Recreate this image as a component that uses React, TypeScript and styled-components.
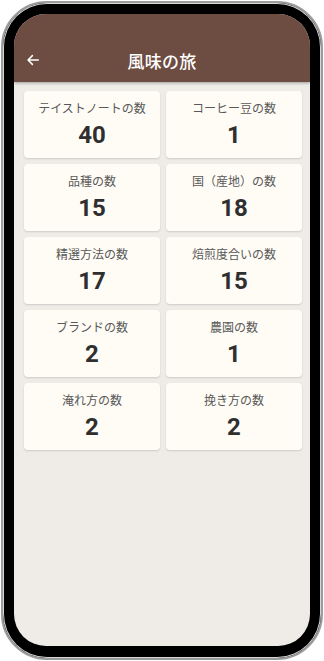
import styled, { createGlobalStyle } from "styled-components";

const GlobalStyle = createGlobalStyle`
  html, body {
    margin: 0;
    padding: 0;
    background: #ffffff;
  }
  body {
    font-family: Roboto, "Noto Sans CJK JP", sans-serif;
  }
`;

const Page = styled.div`
  width: 324px;
  height: 661px;
  padding: 1px;
  box-sizing: border-box;
`;

const Frame = styled.div`
  height: 100%;
  box-sizing: border-box;
  border: 2px solid #9c9c9c;
  border-radius: 46px;
  background: #000;
  padding: 11px 11px 12px 11px;
  box-shadow: inset 0 0 0 1px #d6d6d6;
`;

const Screen = styled.div`
  height: 100%;
  border-radius: 32px;
  overflow: hidden;
  background: #efece8;
  display: flex;
  flex-direction: column;
`;

const Header = styled.header`
  background: #6d4c41;
  padding-top: 24px;
  box-shadow: 0 1px 3px rgba(0, 0, 0, 0.35);
  position: relative;
  z-index: 1;
`;

const Toolbar = styled.div`
  height: 44px;
  display: grid;
  grid-template-columns: 44px 1fr 44px;
  align-items: center;
`;

const BackButton = styled.button`
  border: none;
  background: transparent;
  padding: 0 0 0 12px;
  display: flex;
  align-items: center;
  color: #ffffff;
  cursor: pointer;
`;

const Title = styled.h1`
  margin: 0;
  text-align: center;
  color: #ffffff;
  font-family: "Noto Sans CJK JP", sans-serif;
  font-size: 17px;
  font-weight: 500;
  letter-spacing: 0.3px;
`;

const Grid = styled.div`
  display: grid;
  grid-template-columns: 1fr 1fr;
  gap: 6px;
  padding: 9px 8px 0 10px;
`;

const Card = styled.div`
  height: 67px;
  box-sizing: border-box;
  background: #fffcf6;
  border-radius: 4px;
  box-shadow: 0 1px 2px rgba(0, 0, 0, 0.14);
  display: flex;
  flex-direction: column;
  align-items: center;
  padding-top: 8px;
`;

const Label = styled.div`
  font-family: "Noto Sans CJK JP", sans-serif;
  font-size: 12px;
  line-height: 17px;
  color: #585858;
`;

const Value = styled.div`
  font-family: Roboto, sans-serif;
  font-size: 24px;
  font-weight: 700;
  line-height: 30px;
  margin-top: 4px;
  color: #2f2f2f;
`;

const stats = [
  { label: "テイストノートの数", value: 40 },
  { label: "コーヒー豆の数", value: 1 },
  { label: "品種の数", value: 15 },
  { label: "国（産地）の数", value: 18 },
  { label: "精選方法の数", value: 17 },
  { label: "焙煎度合いの数", value: 15 },
  { label: "ブランドの数", value: 2 },
  { label: "農園の数", value: 1 },
  { label: "淹れ方の数", value: 2 },
  { label: "挽き方の数", value: 2 },
];

const App = () => (
  <>
    <GlobalStyle />
    <Page>
      <Frame>
        <Screen>
          <Header>
            <Toolbar>
              <BackButton aria-label="戻る">
                <svg width="14" height="14" viewBox="0 0 24 24" fill="none">
                  <path
                    d="M21 12H4M11 4.5L3.5 12l7.5 7.5"
                    stroke="currentColor"
                    strokeWidth="2.6"
                    strokeLinecap="round"
                    strokeLinejoin="round"
                  />
                </svg>
              </BackButton>
              <Title>風味の旅</Title>
              <span />
            </Toolbar>
          </Header>
          <Grid>
            {stats.map((s) => (
              <Card key={s.label}>
                <Label>{s.label}</Label>
                <Value>{s.value}</Value>
              </Card>
            ))}
          </Grid>
        </Screen>
      </Frame>
    </Page>
  </>
);

export default App;
